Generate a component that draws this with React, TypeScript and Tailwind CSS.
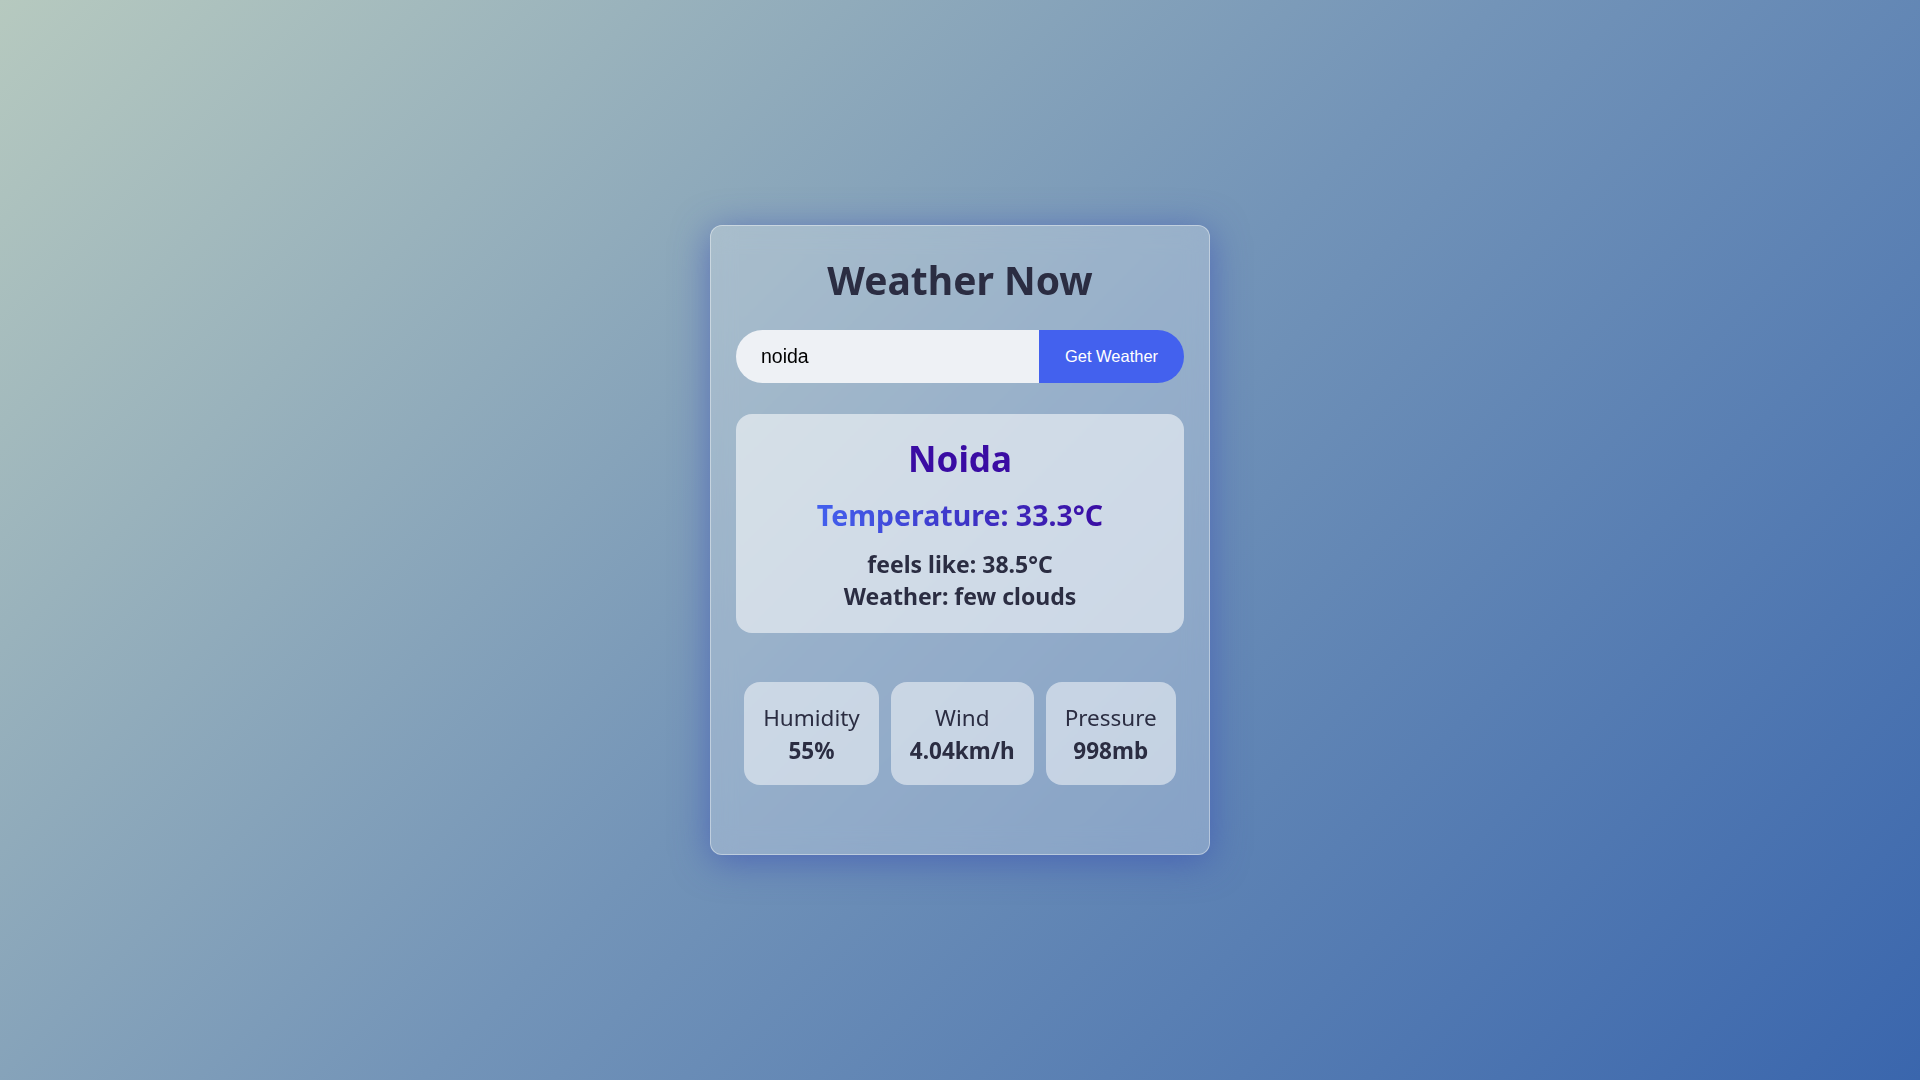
export default function App() {
  const stats = [
    { label: 'Humidity', value: '55%' },
    { label: 'Wind', value: '4.04km/h' },
    { label: 'Pressure', value: '998mb' },
  ]

  return (
    <div
      className="flex min-h-screen w-full items-center justify-center bg-[linear-gradient(135deg,#b6c9bf_0%,#7394b8_50%,#3a66ad_100%)]"
      style={{ fontFamily: '"Segoe UI", "Noto Sans", "Open Sans", sans-serif' }}
    >
      <div className="flex h-[630px] w-[500px] flex-col rounded-xl border border-white/40 bg-white/25 px-[25px] pt-[20px] shadow-[0_6px_36px_rgba(55,75,180,0.6)] backdrop-blur-md">
        {/* title */}
        <h1 className="text-center text-[39px] font-bold leading-[68px] text-[#2b2d42]">Weather Now</h1>

        {/* search */}
        <div className="mt-[16px] flex h-[53px] overflow-hidden rounded-full">
          <input
            defaultValue="noida"
            className="min-w-0 flex-1 bg-[#eef1f5] pl-[25px] text-[19.5px] text-black outline-none"
            style={{ fontFamily: '"Liberation Sans", Arial, sans-serif' }}
          />
          <button
            className="w-[145px] bg-[#4361ee] text-[16.5px] text-white"
            style={{ fontFamily: '"Liberation Sans", Arial, sans-serif' }}
          >
            Get Weather
          </button>
        </div>

        {/* current weather */}
        <div className="mt-[31px] flex h-[219px] flex-col items-center rounded-2xl bg-white/55 pt-[18px]">
          <h2 className="text-[35px] font-bold leading-[54px] text-[#3a0ca3]">Noida</h2>
          <p className="mt-[4px] bg-[linear-gradient(90deg,#4361ee,#3a0ca3)] bg-clip-text text-[28.5px] font-bold leading-[50px] text-transparent">
            Temperature: 33.3°C
          </p>
          <p className="mt-[8px] text-[23px] font-bold leading-[32px] text-[#2b2d42]">feels like: 38.5°C</p>
          <p className="text-[23px] font-bold leading-[32px] text-[#2b2d42]">Weather: few clouds</p>
        </div>

        {/* stats */}
        <div className="mt-[49px] flex justify-center gap-[12px]">
          {stats.map((s) => (
            <div
              key={s.label}
              className="flex h-[103px] flex-col items-center justify-center rounded-2xl bg-white/50 px-[19px] text-[#2b2d42]"
            >
              <span className="text-[22.5px] leading-[33px]">{s.label}</span>
              <span className="text-[22.5px] font-bold leading-[33px]">{s.value}</span>
            </div>
          ))}
        </div>
      </div>
    </div>
  )
}
